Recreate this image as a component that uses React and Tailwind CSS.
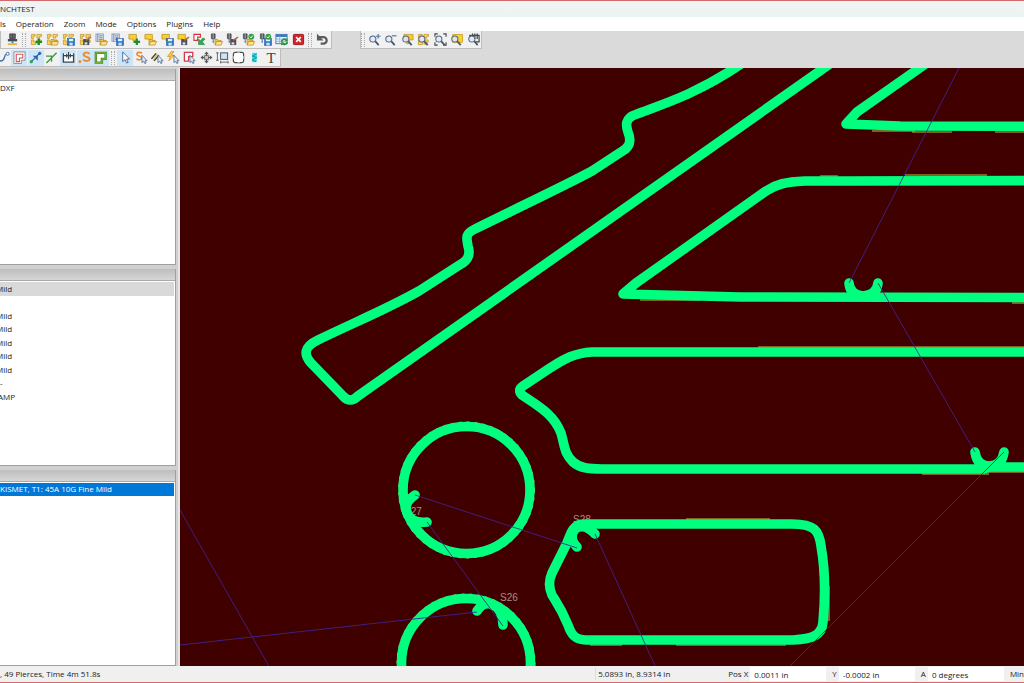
import React from 'react';
import clsx from 'clsx';

/* Small shapes the toolbar icons are put together from (14 x 14 grid) */
const Nest = () => (
  <g fill="#f9d558" stroke="#c1952a" strokeWidth="0.8">
    <path d="M1.500 1.500h4v2h-2v2.500h-2z" />
    <path d="M7.500 1.500h5v2h-2v2h-3z" />
    <path d="M1.500 7.500h2.500v2h2v3h-4.500z" />
    <path d="M7.500 7.500h4.500v2.500h-2v2h-2.500z" />
  </g>
);

const Part = () => <path d="M1 1.500h8v7h-3.500v-2h-4.500z" fill="#fbd02c" stroke="#b8901c" strokeWidth="0.8" />;

const Sheet = () => (
  <g>
    <rect x="1" y="1" width="8" height="8" fill="#d5dde8" stroke="#7a93b4" strokeWidth="0.8" />
    <path d="M3 1v8M4.500 3h3.500M4.500 5h3.500M4.500 7h3.500" stroke="#5f7fa8" strokeWidth="0.8" />
  </g>
);

const Torch = () => (
  <g>
    <path d="M1.500 1h4v5h-4z" fill="#5a5e66" stroke="#444" strokeWidth="0.8" />
    <path d="M3.500 1v5" stroke="#b8bcc4" strokeWidth="0.800" />
    <path d="M2 6.500h3l-1 1.500h-1z" fill="#8a929c" />
    <path d="M3.500 8v2.500" stroke="#3878c0" strokeWidth="1.400" />
  </g>
);

const Plus = () => <path d="M9.500 6v7M6 9.500h7" stroke="#1e8c34" strokeWidth="2.400" />;

const Folder = () => (
  <g stroke="#b07d12" strokeWidth="0.700">
    <path d="M5.500 13v-6h2.500l1 1h3v1.500" fill="#f2c14a" />
    <path d="M5.500 13l1.700-3.800h6.300l-1.700 3.800z" fill="#ffe48c" />
  </g>
);

const Disk = () => (
  <g>
    <rect x="6" y="6" width="7.500" height="7.500" fill="#2f7ad0" stroke="#1c549c" strokeWidth="0.600" />
    <rect x="7.500" y="6.300" width="4.500" height="2.500" fill="#e8f2fc" />
    <rect x="8" y="10.500" width="3.500" height="3" fill="#cfe0f2" />
  </g>
);

const Edit = () => (
  <g>
    <rect x="4.500" y="6.500" width="6.500" height="6.500" fill="#4c4c58" />
    <rect x="6" y="10" width="3" height="2.500" fill="#dcdce0" />
    <path d="M7.500 8l5.500-3.500" stroke="#b5693c" strokeWidth="1.600" />
  </g>
);

const Check = () => (
  <g>
    <circle cx="10" cy="4" r="3.200" fill="#2fa044" />
    <path d="M8.400 4l1.300 1.300 2-2.600" stroke="#fff" strokeWidth="1" fill="none" />
  </g>
);

const Cursor = () => (
  <path d="M7.500 4.500v8l1.800-1.500 1.300 2.500 1.300-.600-1.200-2.400h2.300z" fill="#e6edf6" stroke="#3f5f86" strokeWidth="0.800" />
);

const Lens = () => (
  <g>
    <path d="M7.500 8.500l4 4.500" stroke="#46566c" strokeWidth="1.800" />
    <circle cx="5.200" cy="6.500" r="3.300" fill="#dceafa" fillOpacity="0.850" stroke="#56667c" strokeWidth="1.100" />
  </g>
);

const fileTools = [
  { name: 'Add nest', art: <><Nest /><Plus /></> },
  { name: 'Open nest', art: <><Nest /><Folder /></> },
  { name: 'Save nest', art: <><Nest /><Disk /></> },
  { name: 'Save nest as', art: <><Nest /><Edit /></> },
  { name: 'Open sheet', art: <><Sheet /><Folder /></> },
  { name: 'Save sheet', art: <><Sheet /><Disk /></> },
  { name: 'New part', art: <><Part /><Plus /></> },
  { name: 'Open part', art: <><Part /><Folder /></> },
  { name: 'Save part', art: <><Part /><Disk /></> },
  { name: 'Save part as', art: <><Part /><Edit /></> },
  {
    name: 'Import drawing',
    art: (
      <>
        <path d="M1 1.500h7v3h-3v3.500h-4z" fill="#fff" stroke="#d8343c" strokeWidth="1.200" />
        <path d="M13 6.500l-3 3 2.500 3h-6.500v-6l2 2 2.500-3z" fill="#2fae48" stroke="#15742a" strokeWidth="0.600" />
      </>
    ),
  },
  { name: 'Open tools', art: <><Torch /><Folder /></> },
  { name: 'Save tools', art: <><Torch /><Edit /></> },
  { name: 'Check tools', art: <><Torch /><Folder /><Check /></> },
  { name: 'Save checked tools', art: <><Torch /><Disk /><Check /></> },
  {
    name: 'Refresh table',
    art: (
      <>
        <rect x="1" y="1.500" width="12" height="10" fill="#edf4fb" stroke="#3b78b8" />
        <path d="M1 3h12" stroke="#3b78b8" strokeWidth="2.500" />
        <path d="M1 6.500h12M1 9h12M5 3v8" stroke="#7ea7d0" strokeWidth="0.800" />
        <path d="M7 9.500a3 3 0 0 1 5-2M13 9.500a3 3 0 0 1-5 2" fill="none" stroke="#229640" strokeWidth="1.800" />
        <path d="M13.500 5.500v3.500h-3.500zM6.500 13.500v-3.500h3.500z" fill="#229640" />
      </>
    ),
  },
  {
    name: 'Close job',
    art: (
      <>
        <rect x="1.500" y="1.500" width="11" height="11" rx="1" fill="#d3222a" stroke="#9a1219" />
        <path d="M4.500 4.500l5 5M9.500 4.500l-5 5" stroke="#fff" strokeWidth="1.700" />
      </>
    ),
  },
];

const undoTool = {
  name: 'Undo',
  art: (
    <>
      <path d="M3 4.500h5a3.500 3.500 0 0 1 0 7h-3" fill="none" stroke="#5c5c5c" strokeWidth="2.400" />
      <path d="M1 0.500v7.500h7z" fill="#5c5c5c" />
    </>
  ),
};

const zoomTools = [
  { name: 'Zoom in', art: <><Lens /><path d="M11 1v5M8.500 3.500h5" stroke="#4f79ac" strokeWidth="1.300" /></> },
  { name: 'Zoom out', art: <><Lens /><path d="M8.500 3h5" stroke="#4f79ac" strokeWidth="1.300" /></> },
  { name: 'Zoom part', art: <><path d="M3 1.500h10v6h-4v4h-3v-5h-3z" fill="#fbc92c" stroke="#c08a18" strokeWidth="0.700" /><Lens /></> },
  { name: 'Zoom nest', art: <><Nest /><Lens /></> },
  { name: 'Zoom extents', art: <><path d="M1 4v-3h3M10 1h3v3M13 10v3h-3M4 13h-3v-3" fill="none" stroke="#444" strokeWidth="1.200" /><Lens /></> },
  { name: 'Zoom sheet', art: <><rect x="3" y="1.500" width="10.500" height="8.500" fill="#fbd02c" stroke="#c29418" strokeWidth="0.700" /><Lens /></> },
  { name: 'Zoom machine', art: <><path d="M3 4v-1.500h10v7h-4M6 0.500v4M8.500 0.500v6M11 0.500v6" fill="none" stroke="#444" strokeWidth="1.300" /><Lens /></> },
];

const viewTools = [
  { name: 'Curve', art: <><path d="M1 9c3 3 6 2 7-2s1-3 2-3" fill="none" stroke="#3467a8" strokeWidth="1.400" /><circle cx="11.500" cy="3" r="1.600" fill="#fff" stroke="#3467a8" /></> },
  {
    name: 'Show parts',
    on: true,
    art: (
      <>
        <path d="M1 1h12v9h-4v3.500h-8z" fill="#fff" stroke="#8a8a8a" strokeWidth="1" />
        <path d="M3.500 3.500h7v4h-3.500v4h-3.500z" fill="#fff" stroke="#cf5564" strokeWidth="1.200" />
      </>
    ),
  },
  {
    name: 'Show rapids',
    on: true,
    art: (
      <>
        <path d="M2 12l9-9" stroke="#2f62a8" strokeWidth="1.300" />
        <path d="M4 5h5.500v5.500z" fill="#2f62a8" />
        <circle cx="2.500" cy="11.500" r="1.700" fill="#35a14c" />
        <circle cx="11.500" cy="2.500" r="1.700" fill="#2f62a8" />
      </>
    ),
  },
  { name: 'Show direction', art: <path d="M1 5.500h6v6M1.500 13l11-11" fill="none" stroke="#3b9c3a" strokeWidth="1.500" /> },
  {
    name: 'Show machine',
    on: true,
    art: (
      <>
        <path d="M1.500 2.500v9.500h11v-9.500" fill="#fff" stroke="#3b4450" strokeWidth="1.500" />
        <path d="M1.500 5h11M5 3v4M7 1v8M9 3v4" stroke="#3b4450" strokeWidth="1.300" />
      </>
    ),
  },
  {
    name: 'Show starts',
    on: true,
    art: (
      <>
        <circle cx="2" cy="11.500" r="1.500" fill="#e8862a" />
        <path d="M12.500 3c-2-2-6.500-1.500-6.500 1s6.500 2 6.500 4.500-4.500 3-7 1" fill="none" stroke="#ef8c2c" strokeWidth="2" />
      </>
    ),
  },
  {
    name: 'Show kerf',
    on: true,
    art: (
      <>
        <path d="M2 2h10.500v6.500h-4v4h-6.500z" fill="#fff" stroke="#3e8f28" strokeWidth="2.600" />
        <path d="M2 2h10.500v6.500h-4v4h-6.500z" fill="none" stroke="#d9d94a" strokeWidth="0.500" />
      </>
    ),
  },
];

const modeTools = [
  { name: 'Select', on: true, art: <path d="M4 1v10.500l2.500-2.200 1.700 3.700 1.700-.800-1.700-3.500h3.300z" fill="#fff" stroke="#47698f" /> },
  { name: 'Edit start', art: <><path d="M7.500 2.500c-1.500-1.500-5.500-1.500-5.500 1s5 1.500 5 4-3.500 2.500-5.500 1" fill="none" stroke="#ef8c2c" strokeWidth="1.700" /><Cursor /></> },
  { name: 'Edit path', art: <><path d="M0.500 8.500l5-6M3.500 10.500l5-6" stroke="#3c3c3c" strokeWidth="1.500" /><path d="M2 10l5-7" stroke="#e6c22e" strokeWidth="1.300" /><Cursor /></> },
  { name: 'Edit order', art: <><path d="M4.500 0.500l-4 5.500h3l-1.500 4.500 5.500-6h-3l3-4z" fill="#fbcf2f" stroke="#c9831b" strokeWidth="0.700" /><Cursor /></> },
  { name: 'Edit part', art: <><path d="M1.500 1.500h9v4.500h-4.500v5h-4.500z" fill="#fff" stroke="#cf3c4a" strokeWidth="1.400" /><Cursor /></> },
  {
    name: 'Move',
    art: (
      <>
        <path d="M7 2v10M2 7h10" stroke="#555" strokeWidth="1" />
        <path d="M7 0.500l2.500 3h-5zM7 13.500l2.500-3h-5zM0.500 7l3-2.500v5zM13.500 7l-3-2.500v5z" fill="#555" />
        <rect x="5" y="5" width="4" height="4" fill="#c9c9c9" stroke="#555" strokeWidth="0.8" />
      </>
    ),
  },
  {
    name: 'Measure',
    art: (
      <>
        <rect x="5" y="2" width="7.500" height="7" fill="#cfe4f8" stroke="#454d58" />
        <path d="M1.500 2v8M0 2h3M0 10h3M5 12h8M5 10.500v3M13 10.500v3" stroke="#555" strokeWidth="0.900" />
      </>
    ),
  },
  {
    name: 'Sheet',
    art: (
      <>
        <rect x="1.500" y="1.500" width="11" height="11" rx="2" fill="#fff" stroke="#4a4a4a" strokeWidth="1.300" />
        <path d="M5.500 1.500h3M5.500 12.500h3M1.500 5.500v3M12.500 5.500v3" stroke="#a8a8a8" strokeWidth="1.300" />
      </>
    ),
  },
  {
    name: 'Simulate',
    art: (
      <>
        <path d="M4.500 2h5v10h-5z" fill="#35dce4" />
        <path d="M9.500 3l-5 2.500 5 1.500-5 2.500 4 2" fill="none" stroke="#0d8fa4" strokeWidth="1" />
      </>
    ),
  },
  { name: 'Text', text: 'T' },
];

const canvasParts = [
  'M741 64C722 77 703 87 688 94C668 103 650 109 637 114C624 118 626 126 628 132C632 142 629 148 621 152L592 171C570 183 540 197 475 229C464 234 467 239 468 246C471 255 467 261 461 264L419 291C385 310 355 322 318 340C303 347 304 355 311 363L343 396Q350 404 358 396L834 61',
  'M931 60L857 112L846 124L900 126L1300 127',
  'M1300 180L850 181L805 181C785 182 777 184 766 191L636 283L623 294L740 297L1300 298',
  'M1300 352L592 352C573 353 563 360 550 368L523 386Q517 390 522 395C540 407 554 415 561 433C565 447 564 453 573 462C580 468 588 469 602 469L984 469L990 467L1300 467',
  'M583 524L792 524C814 524 819 530 821 546Q827 580 823 622C822 635 813 639 793 640L586 640C575 640 571 634 568 625C562 610 559 606 552 595Q547 584 552 573L567 543C571 532 574 524 583 524Z',
];

const leadIns = [
  'M849 283Q850 295 863 296Q877 295 878 283',
  'M975 452Q977 466 989 466Q1002 466 1004 452',
  'M415 495Q403 503 407 513Q412 524 427 522',
  'M477 611Q483 602 490 604Q503 608 503 625',
  'M595 534Q584 522 575 529Q568 538 577 547',
];

const overburn = [
  'M872 131h43M912 132h40M995 132h29',
  'M905 175h82M820 176h18',
  'M758 347h266M922 474h67M686 519h84M590 645h32M676 645h110M829 586v35',
  'M988 472h36M1012 303h12M640 300h60',
];

const rapids = 'M959 68L849 283M878 283L975 452M1004 452L788 668M595 534L656 668M415 495L577 548M427 522L503 626M477 612L180 645M180 510L270 668';

const materials = ['Mild', '', 'Mild', 'Mild', 'Mild', 'Mild', 'Mild', '-', 'AMP'];

const menu = ['ls', 'Operation', 'Zoom', 'Mode', 'Options', 'Plugins', 'Help'];

const ToolButton = ({ tool }) => (
  <button
    type="button"
    aria-label={tool.name}
    className={clsx('flex h-4 w-4 shrink-0 items-center justify-center', tool.on && 'bg-[#cce5f8]')}
  >
    {tool.text ? (
      <span className="font-['Liberation_Serif',serif] text-[15px] leading-4 text-[#444]">{tool.text}</span>
    ) : (
      <svg viewBox="0 0 14 14" className="h-[13px] w-[13px]">{tool.art}</svg>
    )}
  </button>
);

const Grip = () => <div className="h-3.5 w-1 shrink-0 border-x border-dotted border-[#a8a8a8]" />;

const Bar = ({ className, children }) => (
  <div className={clsx('flex h-[18px] shrink-0 items-center border-r border-b border-[#bdbdbd] bg-[#f1f1f1]', className)}>
    {children}
  </div>
);

const Panel = ({ className, children }) => (
  <section className={clsx('flex flex-col border-r border-b border-[#9f9f9f] bg-white', className)}>
    <div className="h-3 shrink-0 border-b border-[#a9a9a9] bg-linear-to-b from-[#bebebe] to-[#d6d6d6]" />
    {children}
  </section>
);

const Readout = ({ id, label, value }) => (
  <div className="flex items-center gap-0.5">
    <label htmlFor={id}>{label}</label>
    <input id={id} defaultValue={value} className="h-3.5 w-[76px] bg-white px-1 outline-none" />
  </div>
);

const Canvas = () => (
  <svg
    viewBox="180 68 844 598"
    preserveAspectRatio="xMinYMin slice"
    className="block h-full w-full"
    role="img"
    aria-label="Nested cut paths"
  >
    <g className="font-['Liberation_Sans',Arial,sans-serif] text-[10px]" fill="#b08a80">
      <text x="404" y="515">S27</text>
      <text x="500" y="601">S26</text>
      <text x="573" y="523">S28</text>
    </g>
    <g fill="none" stroke="#b5c83c" strokeWidth="1">
      {overburn.map((d) => <path key={d} d={d} />)}
      <circle cx="466.500" cy="490" r="68" strokeDasharray="3 5" />
      <circle cx="466" cy="663" r="69" strokeDasharray="3 5" />
    </g>
    <g fill="none" stroke="#00ff7f" strokeWidth="9.600" strokeLinejoin="round" strokeLinecap="round">
      {canvasParts.map((d) => <path key={d} d={d} />)}
      {leadIns.map((d) => <path key={d} d={d} />)}
      <circle cx="466.500" cy="490" r="63.500" />
      <circle cx="466" cy="663" r="64.500" />
    </g>
    <path d={rapids} fill="none" stroke="#3c2496" strokeWidth="1" strokeOpacity="0.850" />
  </svg>
);

const App = () => {
  return (
    <div className="flex h-screen flex-col overflow-hidden border-y border-[#cf6a6e] bg-[#dadada] font-['Open_Sans','Noto_Sans',sans-serif] text-[8px] leading-3 text-[#222]">
      <header className="flex h-4 shrink-0 items-center bg-linear-to-b from-[#f3f3f3] to-[#e8f5f1]">
        <h1>NCHTEST</h1>
      </header>

      <nav className="flex h-3.5 shrink-0 items-center gap-2.5 bg-white">
        {menu.map((item) => (
          <button key={item} type="button">{item}</button>
        ))}
      </nav>

      <div className="flex shrink-0 flex-col pb-px">
        <div className="flex">
          <Bar className="w-[332px] gap-0.5 border-l border-l-[#bdbdbd] pl-[3px]">
            <button type="button" aria-label="Machine" className="flex h-4 w-4 shrink-0 items-center justify-center">
              <svg viewBox="0 0 14 14" className="h-[13px] w-[13px]">
                <path d="M4 1h6v5h-6zM7 1v5" fill="#667" stroke="#444" />
                <path d="M2 6.500h10v2.500h-10z" fill="#3c4a5c" />
                <path d="M7 9v2" stroke="#3870b8" strokeWidth="2" />
                <path d="M2 12h10" stroke="#e6b53a" strokeWidth="2" />
              </svg>
            </button>
            <Grip />
            <div className="flex w-[278px] shrink-0 justify-between">
              {fileTools.map((tool) => <ToolButton key={tool.name} tool={tool} />)}
            </div>
            <Grip />
            <ToolButton tool={undoTool} />
          </Bar>
          <Bar className="ml-7 w-[122px] justify-between border-l border-l-[#bdbdbd]">
            <Grip />
            <div className="flex w-[115px] shrink-0 justify-between">
              {zoomTools.map((tool) => <ToolButton key={tool.name} tool={tool} />)}
            </div>
          </Bar>
        </div>
        <Bar className="w-[281px] gap-0.5 overflow-hidden">
          <div className="-ml-[5px] flex w-[114px] shrink-0 justify-between">
            {viewTools.map((tool) => <ToolButton key={tool.name} tool={tool} />)}
          </div>
          <Grip />
          <div className="flex w-[162px] shrink-0 justify-between">
            {modeTools.map((tool) => <ToolButton key={tool.name} tool={tool} />)}
          </div>
        </Bar>
      </div>

      <main className="flex min-h-0 flex-1">
        <aside className="flex w-[180px] shrink-0 flex-col gap-1 border-r-2 border-[#e4e4e4] bg-[#d0d0d0] pt-px pr-0.5">
          <Panel className="min-h-0 flex-1">
            <p className="pt-px">DXF</p>
          </Panel>
          <Panel className="min-h-0 flex-1">
            <ul className="grid h-[122px] grid-rows-9 pt-px pr-px">
              {materials.map((name, i) => (
                <li key={i} className={clsx('flex items-center', i === 0 && 'bg-[#d9d9d9]')}>
                  <span className={clsx(name === 'Mild' && '-ml-1', name === 'AMP' && '-ml-0.5')}>{name}</span>
                </li>
              ))}
            </ul>
          </Panel>
          <Panel className="min-h-0 flex-1">
            <p className="mt-px mr-px h-[13px] bg-[#0078d7] text-white">KISMET, T1: 45A 10G Fine Mild</p>
          </Panel>
        </aside>
        <div className="min-w-0 flex-1 bg-[#400000]">
          <Canvas />
        </div>
      </main>

      <footer className="flex h-4 shrink-0 items-center overflow-hidden bg-[#f0f0f0] whitespace-nowrap">
        <span className="flex-1">, 49 Pierces, Time 4m 51.8s</span>
        <span className="w-[133px] border-l border-[#dcdcdc] pl-0.5">5.0893 in, 8.9314 in</span>
        <div className="flex items-center gap-1.5">
          <Readout id="pos-x" label="Pos X" value="0.0011 in" />
          <Readout id="pos-y" label="Y" value="-0.0002 in" />
          <Readout id="pos-a" label="A" value="0 degrees" />
          <span>Min</span>
        </div>
      </footer>
    </div>
  );
};

export default App;
